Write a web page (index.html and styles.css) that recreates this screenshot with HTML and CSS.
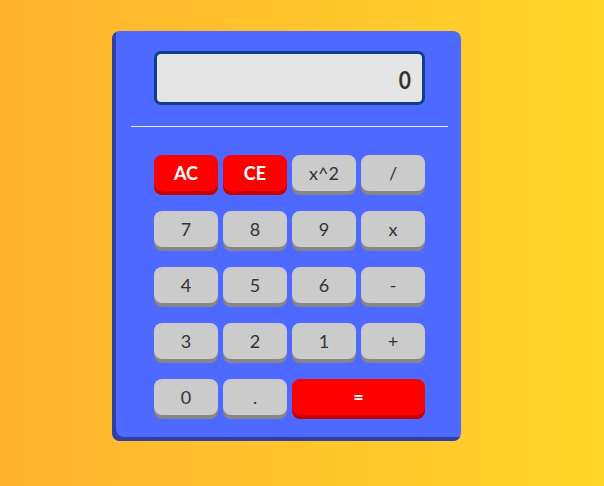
FILE: index.html
```html
<!DOCTYPE html>
<html>
<head>
<meta charset="utf-8">
<link rel="stylesheet" href="styles.css">
</head>
<body>
<div class="page">
  <div class="calc">
    <div class="display"><span class="value">0</span></div>
    <hr class="divider">
    <div class="keys">
      <button class="key red">AC</button>
      <button class="key red">CE</button>
      <button class="key">x^2</button>
      <button class="key">/</button>
      <button class="key">7</button>
      <button class="key">8</button>
      <button class="key">9</button>
      <button class="key">x</button>
      <button class="key">4</button>
      <button class="key">5</button>
      <button class="key">6</button>
      <button class="key">-</button>
      <button class="key">3</button>
      <button class="key">2</button>
      <button class="key">1</button>
      <button class="key">+</button>
      <button class="key">0</button>
      <button class="key">.</button>
      <button class="key red wide">=</button>
    </div>
  </div>
</div>
</body>
</html>
```
FILE: styles.css
```css
html, body {
  margin: 0;
  padding: 0;
}
body {
  width: 604px;
  height: 486px;
  background: linear-gradient(to right, #ffb32e, #ffd52a);
  font-family: "Lato", "Open Sans", sans-serif;
  overflow: hidden;
}
.page {
  padding-top: 31px;
  padding-left: 112px;
}
.calc {
  width: 349px;
  box-sizing: border-box;
  background: #4d69ff;
  border-radius: 8px;
  box-shadow: inset 4px -4px 0 #2f3fa3;
  padding: 20px 36px 26px 42px;
}
.display {
  height: 54px;
  box-sizing: border-box;
  border: 3px solid #0a3f8c;
  border-radius: 7px;
  background: #e5e5e5;
  display: flex;
  align-items: center;
  justify-content: flex-end;
  padding-right: 11px;
}
.value {
  font-family: "Lato", sans-serif;
  font-weight: bold;
  font-size: 21px;
  color: #333;
  display: inline-block;
  transform: scale(1, 1.2);
}
.divider {
  margin: 21px -23px 28px -23px;
  border: 0;
  height: 1px;
  background: #e8e8f0;
}
.keys {
  display: grid;
  grid-template-columns: repeat(4, 64px);
  grid-auto-rows: 36px;
  column-gap: 5px;
  row-gap: 20px;
}
.key {
  border: 0;
  border-radius: 8px;
  background: #cbcbcb;
  box-shadow: 0 4px 0 #878787;
  color: #333;
  font-family: "Lato", sans-serif;
  font-size: 18px;
  padding: 0;
}
.key.red {
  background: #ff0000;
  box-shadow: 0 4px 0 #c40000;
  color: #fff;
  font-weight: bold;
}
.key.wide {
  grid-column: span 2;
}
```
